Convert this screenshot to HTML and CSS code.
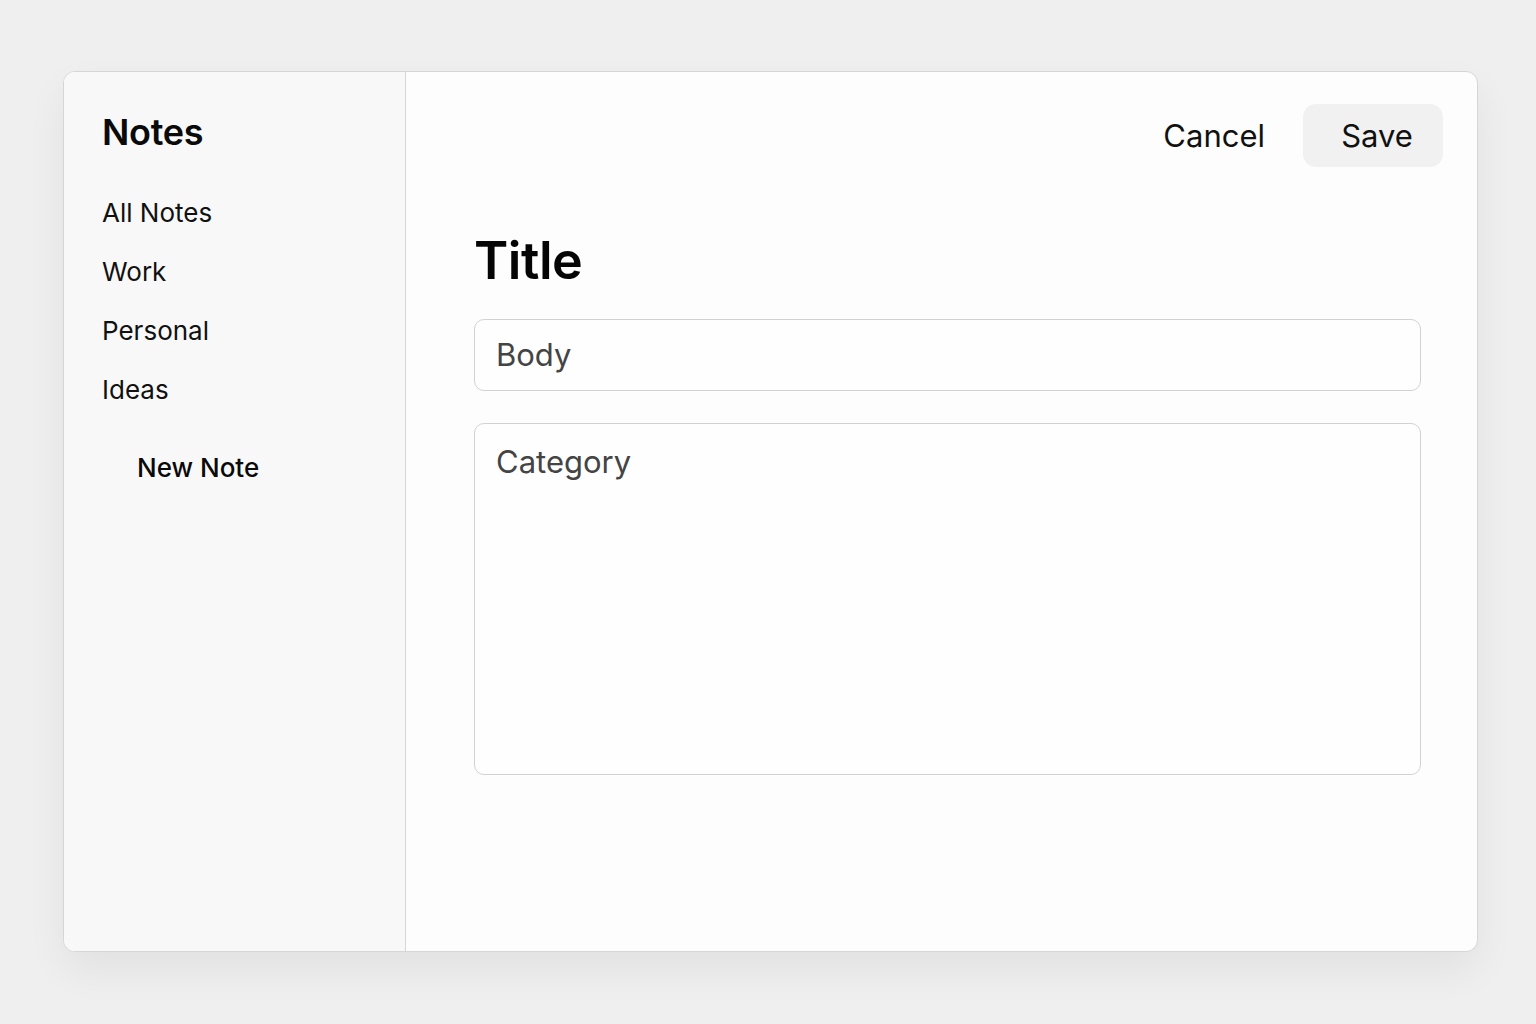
FILE: index.html
```html
<!DOCTYPE html>
<html lang="en">
<head>
<meta charset="utf-8">
<title>Notes</title>
<link rel="stylesheet" href="styles.css">
</head>
<body>
<div class="window">
  <aside class="sidebar">
    <h1 class="brand">Notes</h1>
    <nav class="nav">
      <a class="nav-item">All Notes</a>
      <a class="nav-item">Work</a>
      <a class="nav-item">Personal</a>
      <a class="nav-item">Ideas</a>
    </nav>
    <button class="new-note">New Note</button>
  </aside>
  <main class="editor">
    <div class="toolbar">
      <button class="btn btn-cancel">Cancel</button>
      <button class="btn btn-save">Save</button>
    </div>
    <div class="form">
      <h2 class="title">Title</h2>
      <div class="field field-body">Body</div>
      <div class="field field-category">Category</div>
    </div>
  </main>
</div>
</body>
</html>
```

FILE: styles.css
```css
html, body {
  margin: 0;
  padding: 0;
}
body {
  background: #efefef;
  font-family: "Inter", "Liberation Sans", sans-serif;
  color: #111;
  width: 1536px;
  height: 1024px;
  overflow: hidden;
}
.window {
  margin: 71px 0 0 63px;
  width: 1415px;
  height: 881px;
  box-sizing: border-box;
  border: 1px solid #d6d6d6;
  border-radius: 12px;
  background: #fdfdfd;
  display: flex;
  overflow: hidden;
  box-shadow: 0 18px 40px rgba(0,0,0,0.06);
}
.sidebar {
  width: 342px;
  box-sizing: border-box;
  background: #f8f8f8;
  border-right: 1px solid #d6d6d6;
  padding: 38px 0 0 38px;
  display: flex;
  flex-direction: column;
}
.brand {
  margin: 0;
  font-size: 36px;
  font-weight: 600;
  line-height: 44px;
  letter-spacing: -0.3px;
  color: #0a0a0a;
}
.nav {
  display: flex;
  flex-direction: column;
  margin-top: 43px;
  gap: 27px;
}
.nav-item {
  font-size: 26px;
  line-height: 32px;
  color: #111;
  font-weight: 400;
}
.new-note {
  align-self: flex-start;
  margin: 46px 0 0 35px;
  padding: 0;
  border: none;
  background: none;
  font-family: inherit;
  font-size: 26px;
  line-height: 32px;
  font-weight: 500;
  color: #0a0a0a;
}
.editor {
  flex: 1;
  display: flex;
  flex-direction: column;
  padding: 32px 34px 0 68px;
}
.toolbar {
  display: flex;
  justify-content: flex-end;
  align-items: center;
  gap: 38px;
}
.btn {
  border: none;
  font-family: inherit;
  font-size: 31px;
  color: #111;
  background: none;
  padding: 0;
  height: 63px;
}
.btn-save {
  background: #f1f1f1;
  border-radius: 13px;
  width: 140px;
  padding-left: 8px;
}
.form {
  margin-top: 64px;
  margin-right: 22px;
  display: flex;
  flex-direction: column;
}
.title {
  margin: 0;
  font-size: 52px;
  font-weight: 600;
  line-height: 60px;
  letter-spacing: -0.5px;
  color: #050505;
}
.field {
  box-sizing: border-box;
  border: 1px solid #d2d2d2;
  border-radius: 10px;
  background: #fefefe;
  font-size: 31px;
  color: #444;
  padding: 0 21px;
}
.field-body {
  margin-top: 28px;
  height: 72px;
  line-height: 70px;
}
.field-category {
  margin-top: 32px;
  height: 352px;
  padding-top: 18px;
  line-height: 40px;
}
```
